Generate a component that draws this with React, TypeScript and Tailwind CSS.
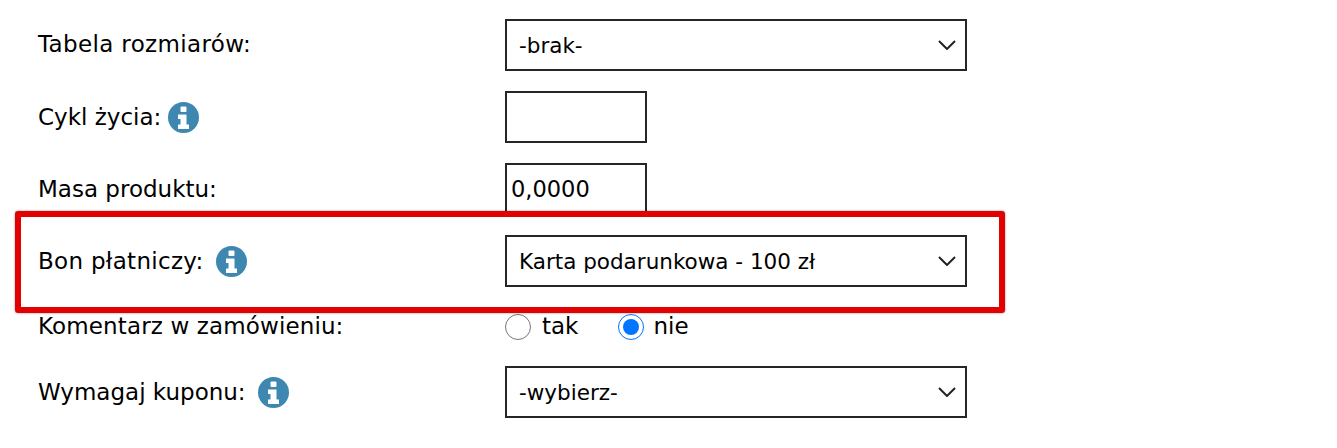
const font = "font-['DejaVu_Sans',sans-serif] text-[23px] text-black";

function InfoIcon() {
  return (
    <svg width="31" height="31" viewBox="0 0 31 31" className="shrink-0">
      <circle cx="15.5" cy="15.5" r="15.5" fill="#3d87b0" />
      <rect x="12.5" y="4.5" width="6" height="5.5" rx="1" fill="#fff" />
      <path d="M10 12.5h8.5v10h2.5v4.5H10v-4.5h2.5v-5.5H10z" fill="#fff" />
    </svg>
  );
}

function Select({ value }: { value: string }) {
  return (
    <div className="flex h-[52px] w-[462px] items-center justify-between border-2 border-[#262626] pl-[12px] pr-[8px] text-[21.5px]">
      <span className="pt-[2px]">{value}</span>
      <svg width="18" height="10" viewBox="0 0 18 10" fill="none" stroke="#222" strokeWidth="2" className="mr-[1px]">
        <path d="M1 1l8 8 8-8" />
      </svg>
    </div>
  );
}

export default function App() {
  return (
    <div className={`relative h-[448px] w-[1337px] overflow-hidden bg-white pl-[38px] pt-[19px] ${font}`}>
      <div className="flex flex-col gap-[20px]">
        <div className="flex items-center">
          <div className="w-[467px] pb-[2px] tracking-[0.35px]">Tabela rozmiarów:</div>
          <Select value="-brak-" />
        </div>
        <div className="flex items-center">
          <div className="flex w-[467px] items-center gap-[7px]">
            <span>Cykl życia:</span>
            <InfoIcon />
          </div>
          <div className="h-[52px] w-[142px] border-2 border-[#262626]" />
        </div>
        <div className="flex items-center">
          <div className="w-[467px]">Masa produktu:</div>
          <div className="flex h-[52px] w-[142px] items-center border-2 border-[#262626] pl-[4px] pt-[2px] text-[22.5px]">0,0000</div>
        </div>
        <div className="flex items-center">
          <div className="flex w-[467px] items-center gap-[12px]">
            <span className="tracking-[0.3px]">Bon płatniczy:</span>
            <InfoIcon />
          </div>
          <Select value="Karta podarunkowa - 100 zł" />
        </div>
        <div className="flex h-[39px] items-center">
          <div className="w-[467px] tracking-[0.13px]">Komentarz w zamówieniu:</div>
          <div className="flex items-center">
            <span className="h-[26px] w-[26px] rounded-full border border-[#767676] bg-white" />
            <span className="ml-[11px]">tak</span>
            <span className="ml-[40px] flex h-[26px] w-[26px] items-center justify-center rounded-full border border-[#0075ff] bg-white">
              <span className="h-[16px] w-[16px] rounded-full bg-[#0075ff]" />
            </span>
            <span className="ml-[9px]">nie</span>
          </div>
        </div>
        <div className="flex items-center">
          <div className="flex w-[467px] items-center gap-[12px]">
            <span>Wymagaj kuponu:</span>
            <InfoIcon />
          </div>
          <Select value="-wybierz-" />
        </div>
      </div>
      {/* red highlight frame */}
      <div className="absolute left-[15px] top-[211px] h-[102px] w-[990px] rounded-[3px] border-[6px] border-[#e30000] shadow-[0_0_2px_rgba(0,0,0,0.5)]" />
    </div>
  );
}
